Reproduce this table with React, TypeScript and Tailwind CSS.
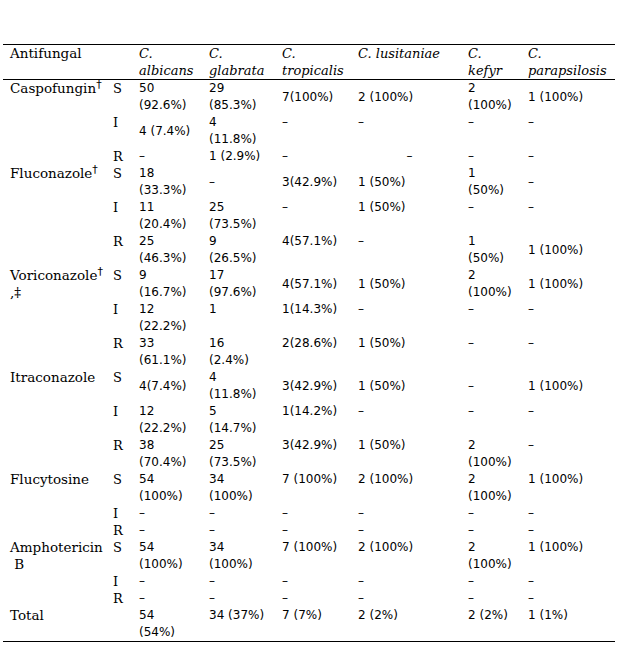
import React from "react";

type Cell = string | [string, "m" | "c"];

type Row = {
  label?: React.ReactNode;
  sir: string;
  cells: Cell[];
};

const dash: Cell[] = ["–", "–", "–", "–", "–", "–"];

const rows: Row[] = [
  {
    label: (
      <>
        Caspofungin<sup className="text-[11px] font-['DejaVu_Sans']">†</sup>
      </>
    ),
    sir: "S",
    cells: ["50\n(92.6%)", "29\n(85.3%)", ["7(100%)", "m"], ["2 (100%)", "m"], "2\n(100%)", ["1 (100%)", "m"]],
  },
  { sir: "I", cells: [["4 (7.4%)", "m"], "4\n(11.8%)", "–", "–", "–", "–"] },
  { sir: "R", cells: ["–", "1 (2.9%)", "–", ["–", "c"], "–", "–"] },
  {
    label: (
      <>
        Fluconazole<sup className="text-[11px] font-['DejaVu_Sans']">†</sup>
      </>
    ),
    sir: "S",
    cells: ["18\n(33.3%)", ["–", "m"], ["3(42.9%)", "m"], ["1 (50%)", "m"], "1\n(50%)", ["–", "m"]],
  },
  { sir: "I", cells: ["11\n(20.4%)", "25\n(73.5%)", "–", "1 (50%)", "–", "–"] },
  { sir: "R", cells: ["25\n(46.3%)", "9\n(26.5%)", "4(57.1%)", "–", "1\n(50%)", ["1 (100%)", "m"]] },
  {
    label: (
      <>
        Voriconazole<sup className="text-[11px] font-['DejaVu_Sans']">†</sup>
        <br />
        ,‡
      </>
    ),
    sir: "S",
    cells: ["9\n(16.7%)", "17\n(97.6%)", ["4(57.1%)", "m"], ["1 (50%)", "m"], "2\n(100%)", ["1 (100%)", "m"]],
  },
  { sir: "I", cells: ["12\n(22.2%)", "1", "1(14.3%)", "–", "–", "–"] },
  { sir: "R", cells: ["33\n(61.1%)", "16\n(2.4%)", "2(28.6%)", "1 (50%)", "–", "–"] },
  {
    label: "Itraconazole",
    sir: "S",
    cells: [["4(7.4%)", "m"], "4\n(11.8%)", ["3(42.9%)", "m"], ["1 (50%)", "m"], ["–", "m"], ["1 (100%)", "m"]],
  },
  { sir: "I", cells: ["12\n(22.2%)", "5\n(14.7%)", "1(14.2%)", "–", "–", "–"] },
  { sir: "R", cells: ["38\n(70.4%)", "25\n(73.5%)", "3(42.9%)", "1 (50%)", "2\n(100%)", "–"] },
  {
    label: "Flucytosine",
    sir: "S",
    cells: ["54\n(100%)", "34\n(100%)", "7 (100%)", "2 (100%)", "2\n(100%)", "1 (100%)"],
  },
  { sir: "I", cells: dash },
  { sir: "R", cells: dash },
  {
    label: (
      <>
        Amphotericin
        <br />
        &nbsp;B
      </>
    ),
    sir: "S",
    cells: ["54\n(100%)", "34\n(100%)", "7 (100%)", "2 (100%)", "2\n(100%)", "1 (100%)"],
  },
  { sir: "I", cells: dash },
  { sir: "R", cells: dash },
  {
    label: "Total",
    sir: "",
    cells: ["54\n(54%)", "34 (37%)", "7 (7%)", "2 (2%)", "2 (2%)", "1 (1%)"],
  },
];

const species = [
  ["C.", "albicans"],
  ["C.", "glabrata"],
  ["C.", "tropicalis"],
  ["C. lusitaniae", ""],
  ["C.", "kefyr"],
  ["C.", "parapsilosis"],
];

function DataCell({ cell }: { cell: Cell }) {
  const text = typeof cell === "string" ? cell : cell[0];
  const mode = typeof cell === "string" ? "" : cell[1];
  return (
    <td
      className={
        "pl-[7px] whitespace-pre font-['DejaVu_Sans'] text-[12px] " +
        (mode === "m" ? "align-middle" : "align-top") +
        (mode === "c" ? " text-center pl-0" : "")
      }
    >
      {text}
    </td>
  );
}

export default function App() {
  return (
    <div className="pt-[44px] pl-[3px] bg-white text-black leading-[17px]">
      <table className="table-fixed border-collapse w-[612px] border-t border-b border-black">
        <colgroup>
          <col className="w-[103px]" />
          <col className="w-[26px]" />
          <col className="w-[70px]" />
          <col className="w-[73px]" />
          <col className="w-[76px]" />
          <col className="w-[110px]" />
          <col className="w-[60px]" />
          <col className="w-[94px]" />
        </colgroup>
        <thead>
          <tr className="border-b border-black">
            <th className="pl-[7px] text-left font-normal align-top font-['DejaVu_Serif'] text-[13.5px]">
              Antifungal
            </th>
            <th />
            {species.map(([a, b], i) => (
              <th
                key={i}
                className="pl-[7px] text-left font-normal italic align-top font-['DejaVu_Serif'] text-[13px] whitespace-nowrap"
              >
                {a}
                <br />
                {b}
              </th>
            ))}
          </tr>
        </thead>
        <tbody>
          {rows.map((r, i) => (
            <tr key={i}>
              <td className="pl-[7px] align-top font-['DejaVu_Serif'] text-[13.5px] whitespace-nowrap">
                {r.label}
              </td>
              <td className="pl-[7px] align-top font-['DejaVu_Serif'] text-[13px]">{r.sir}</td>
              {r.cells.map((c, j) => (
                <DataCell key={j} cell={c} />
              ))}
            </tr>
          ))}
        </tbody>
      </table>
    </div>
  );
}
